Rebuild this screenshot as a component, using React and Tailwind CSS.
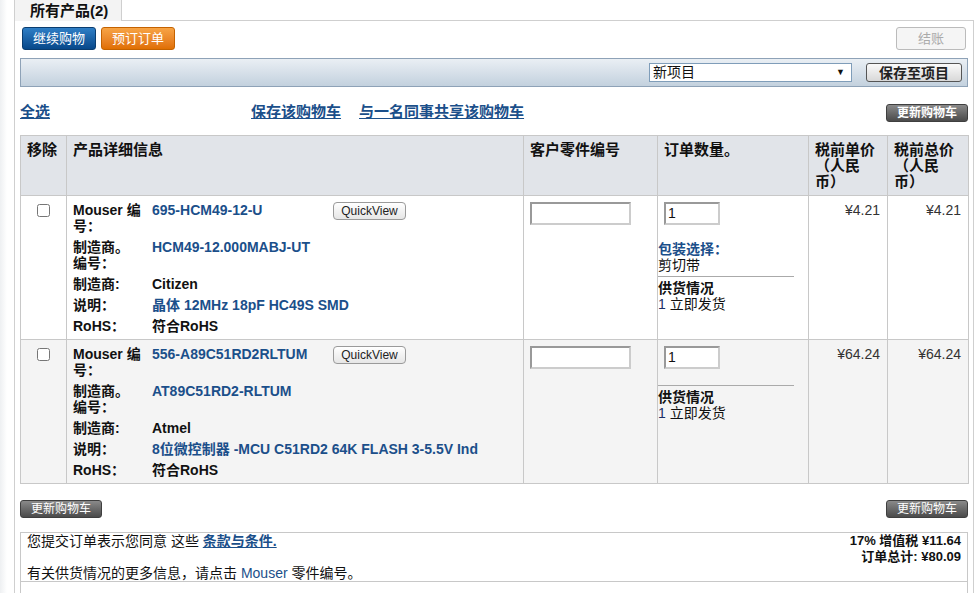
import React from "react";

const Link = ({ children, className = "" }) => (
  <a href="#" className={`text-[#1b4f8a] ${className}`}>
    {children}
  </a>
);

const UpdateButton = () => (
  <button className="h-[18px] w-[82px] rounded-[3px] border border-[#3f3f3f] bg-gradient-to-b from-[#8a8a8a] to-[#4b4b4b] text-[12px] leading-[16px] text-white">
    更新购物车
  </button>
);

const QuickView = () => (
  <button className="h-[18px] w-[73px] rounded-[4px] border border-[#9a9a9a] bg-gradient-to-b from-white to-[#e6e6e6] text-[12px] font-normal leading-[16px] text-[#222]">
    QuickView
  </button>
);

const products = [
  {
    mouser: "695-HCM49-12-U",
    mfrNo: "HCM49-12.000MABJ-UT",
    mfr: "Citizen",
    descLink: "晶体",
    desc: " 12MHz 18pF HC49S SMD",
    packaging: true,
    price: "¥4.21",
    total: "¥4.21",
    bg: "bg-white",
  },
  {
    mouser: "556-A89C51RD2RLTUM",
    mfrNo: "AT89C51RD2-RLTUM",
    mfr: "Atmel",
    descLink: "8位微控制器",
    desc: " -MCU C51RD2 64K FLASH 3-5.5V Ind",
    packaging: false,
    price: "¥64.24",
    total: "¥64.24",
    bg: "bg-[#f4f4f4]",
  },
];

const Details = ({ p }) => (
  <div className="flex flex-col gap-[5px] text-[14px] font-bold leading-[16px]">
    <div className="flex">
      <div className="w-[79px] shrink-0">
        Mouser 编<br />号：
      </div>
      <div className="w-[181px] shrink-0">
        <Link>{p.mouser}</Link>
      </div>
      <QuickView />
    </div>
    <div className="flex">
      <div className="w-[79px] shrink-0">
        制造商。<br />编号：
      </div>
      <Link>{p.mfrNo}</Link>
    </div>
    <div className="flex">
      <div className="w-[79px] shrink-0">制造商:</div>
      <div>{p.mfr}</div>
    </div>
    <div className="flex">
      <div className="w-[79px] shrink-0">说明：</div>
      <div className="text-[#1b4f8a]">
        <Link>{p.descLink}</Link>
        {p.desc}
      </div>
    </div>
    <div className="flex">
      <div className="w-[79px] shrink-0">RoHS：</div>
      <div>符合RoHS</div>
    </div>
  </div>
);

export default function App() {
  return (
    <div className="flex min-h-[593px] w-full bg-white font-['Liberation_Sans','Noto_Sans_CJK_SC',sans-serif] text-[#111]">
      {/* left gutter */}
      <div className="w-[15px] shrink-0 border-r border-[#cfcfcf] bg-gradient-to-r from-[#eef0f2] via-white to-white" />

      <div className="flex w-[959px] shrink-0 flex-col">
        {/* tab row */}
        <div className="flex h-[21px]">
          <div className="flex w-[107px] items-center border-r border-[#cfcfcf] bg-[#f3f3f3] pl-[15px] text-[15px] font-bold leading-[20px]">
            所有产品(2)
          </div>
          <div className="flex-1 border-b border-[#cfcfcf]" />
        </div>

        <div className="flex flex-1 flex-col border-r border-[#cfcfcf] px-[5px] pb-0">
          {/* top buttons */}
          <div className="mt-[6px] flex items-center justify-between pl-[2px] pr-[2px]">
            <div className="flex gap-[5px]">
              <button className="h-[23px] w-[74px] rounded-[3px] border border-[#0a3d70] bg-gradient-to-b from-[#2f7fc6] to-[#07488a] text-[13px] leading-[20px] text-white">
                继续购物
              </button>
              <button className="h-[23px] w-[74px] rounded-[3px] border border-[#c46200] bg-gradient-to-b from-[#f7a444] to-[#e06f00] text-[13px] leading-[20px] text-white">
                预订订单
              </button>
            </div>
            <button className="h-[23px] w-[70px] rounded-[3px] border border-[#bbbbbb] bg-[#f5f5f5] text-[13px] leading-[20px] text-[#aaaaaa]">
              结账
            </button>
          </div>

          {/* project bar */}
          <div className="mt-[8px] flex h-[29px] items-center justify-end border border-[#8ea2b7] bg-gradient-to-b from-[#eaeff4] to-[#c3d1de] pr-[5px]">
            <div className="flex h-[19px] w-[203px] items-center justify-between border border-[#7f9db9] bg-white pl-[3px] pr-[6px] text-[14px] leading-[17px]">
              <span>新项目</span>
              <span className="text-[9px]">▼</span>
            </div>
            <button className="ml-[14px] h-[19px] w-[96px] rounded-[3px] border border-[#555] bg-gradient-to-b from-[#fafafa] to-[#d8d8d8] text-[14px] font-bold leading-[16px] text-[#222]">
              保存至项目
            </button>
          </div>

          {/* link row */}
          <div className="mt-[16px] flex h-[18px] items-center text-[15px] font-bold leading-[18px]">
            <Link className="underline">全选</Link>
            <Link className="ml-[201px] underline">保存该购物车</Link>
            <Link className="ml-[18px] underline">与一名同事共享该购物车</Link>
            <div className="ml-auto">
              <UpdateButton />
            </div>
          </div>

          {/* cart table */}
          <table className="mt-[14px] w-[948px] table-fixed border-collapse text-[14px]">
            <colgroup>
              <col className="w-[46px]" />
              <col className="w-[457px]" />
              <col className="w-[134px]" />
              <col className="w-[151px]" />
              <col className="w-[79px]" />
              <col className="w-[81px]" />
            </colgroup>
            <thead>
              <tr className="bg-[#e1e4e9] text-left align-top text-[15px] font-bold leading-[16px]">
                <th className="border border-[#c8c8c8] px-[6px] pb-[5px] pt-[6px]">移除</th>
                <th className="border border-[#c8c8c8] px-[6px] pb-[5px] pt-[6px]">产品详细信息</th>
                <th className="border border-[#c8c8c8] px-[6px] pb-[5px] pt-[6px]">客户零件编号</th>
                <th className="border border-[#c8c8c8] px-[6px] pb-[5px] pt-[6px]">订单数量。</th>
                <th className="border border-[#c8c8c8] pb-[5px] pl-[6px] pr-[11px] pt-[6px]">税前单价（人民币）</th>
                <th className="border border-[#c8c8c8] pb-[5px] pl-[6px] pr-[13px] pt-[6px]">税前总价（人民币）</th>
              </tr>
            </thead>
            <tbody>
              {products.map((p) => (
                <tr key={p.mouser} className={`${p.bg} align-top`}>
                  <td className="border border-[#c8c8c8] pt-[6px] text-center">
                    <input type="checkbox" className="h-[13px] w-[13px]" />
                  </td>
                  <td className="border border-[#c8c8c8] px-[6px] pb-[5px] pt-[6px]">
                    <Details p={p} />
                  </td>
                  <td className="border border-[#c8c8c8] px-[6px] pt-[6px]">
                    <div className="h-[23px] w-[101px] border-2 border-[#999] border-b-[#ccc] border-r-[#ccc] bg-white" />
                  </td>
                  <td className="border border-[#c8c8c8] pt-[6px]">
                    <div className="ml-[6px] flex h-[23px] w-[56px] items-center border-2 border-[#999] border-b-[#ccc] border-r-[#ccc] bg-white pl-[2px] text-[14px]">
                      1
                    </div>
                    <div className="mt-[16px] leading-[16px]">
                      {p.packaging && (
                        <>
                          <div className="font-bold text-[#1b4f8a]">包装选择：</div>
                          <div>剪切带</div>
                        </>
                      )}
                    </div>
                    <div className="mt-[3px] w-[136px] border-t border-[#aaa]" />
                    <div className="mt-[3px] leading-[16px]">
                      <div className="font-bold">供货情况</div>
                      <div>
                        <span className="text-[#1a2f66]">1</span> 立即发货
                      </div>
                    </div>
                  </td>
                  <td className="border border-[#c8c8c8] pr-[7px] pt-[6px] text-right leading-[16px] text-[#333]">
                    {p.price}
                  </td>
                  <td className="border border-[#c8c8c8] pr-[7px] pt-[6px] text-right leading-[16px] text-[#333]">
                    {p.total}
                  </td>
                </tr>
              ))}
            </tbody>
          </table>

          {/* bottom buttons */}
          <div className="mt-[16px] flex w-[948px] justify-between">
            <UpdateButton />
            <UpdateButton />
          </div>

          {/* footer */}
          <div className="mt-[14px] w-[948px] flex-1 border border-b-0 border-[#c8c8c8]">
            <div className="flex h-[49px] justify-between border-b border-[#c8c8c8] pl-[6px] pr-[6px]">
              <div className="text-[14px] leading-[16px]">
                <div>
                  您提交订单表示您同意 这些{" "}
                  <Link className="font-bold underline">条款与条件.</Link>
                </div>
                <div className="mt-[16px]">
                  有关供货情况的更多信息，请点击 <span className="text-[#1b4f8a]">Mouser</span> 零件编号。
                </div>
              </div>
              <div className="text-right text-[13px] font-bold leading-[16px]">
                <div>17% 增值税 ¥11.64</div>
                <div>订单总计: ¥80.09</div>
              </div>
            </div>
          </div>
        </div>
      </div>
    </div>
  );
}
